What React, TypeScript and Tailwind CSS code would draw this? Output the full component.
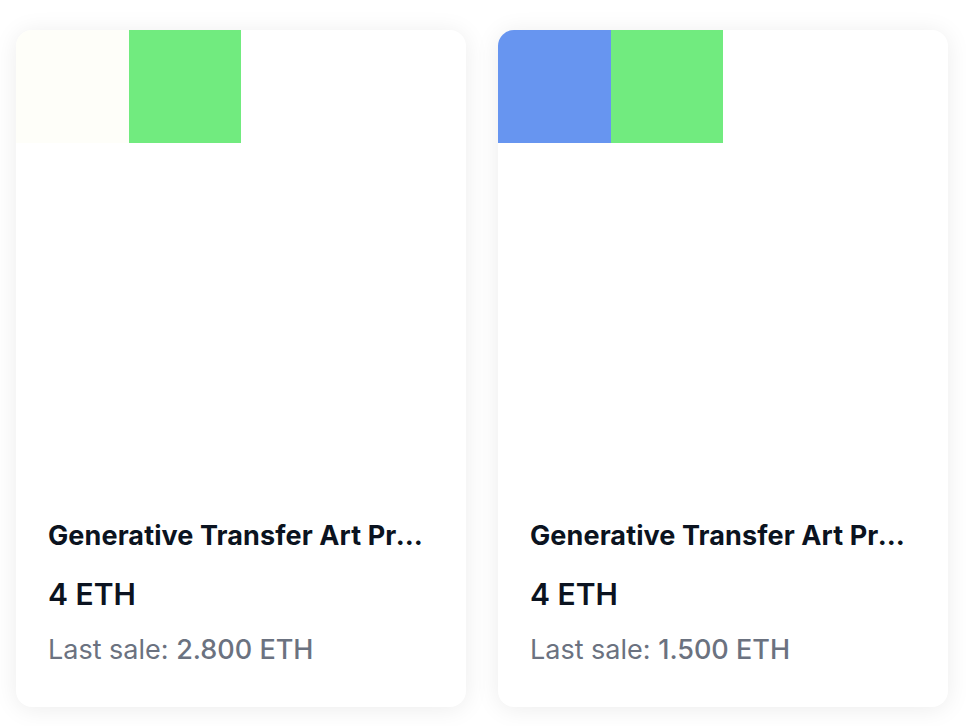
import React from "react";

interface Listing {
  id: string;
  name: string;
  price: string;
  lastSale: string;
  cells: string[];
}

const listings: Listing[] = [
  {
    id: "a",
    name: "Generative Transfer Art Project #1042",
    price: "4 ETH",
    lastSale: "2.800 ETH",
    cells: ["bg-[#fefef9]", "bg-[#71eb7f]"],
  },
  {
    id: "b",
    name: "Generative Transfer Art Project #0871",
    price: "4 ETH",
    lastSale: "1.500 ETH",
    cells: ["bg-[#6795f0]", "bg-[#71eb7f]"],
  },
];

export default function App() {
  return (
    <div className="min-h-screen bg-white font-['Inter',sans-serif]">
      <div className="flex gap-8 px-4 pt-[30px]">
        {listings.map((item) => (
          <ListingCard key={item.id} item={item} />
        ))}
      </div>
    </div>
  );
}

function ListingCard({ item }: { item: Listing }) {
  return (
    <div className="w-[450px] overflow-hidden rounded-2xl bg-white shadow-[0_2px_24px_rgba(0,0,0,0.08)]">
      {/* 4x4 pixel art, only the first row is filled */}
      <div className="grid h-[450px] grid-cols-4 grid-rows-4">
        {item.cells.map((c, i) => (
          <div key={i} className={c} />
        ))}
      </div>
      <div className="px-8 pt-9 pb-[39px]">
        <div className="truncate text-[27px] leading-[40px] font-bold tracking-[0.1px] text-[#0b1320]">
          {item.name}
        </div>
        <div className="mt-5 text-[30px] leading-[36px] font-semibold text-[#0b1320]">
          {item.price}
        </div>
        <div className="mt-5 text-[27px] leading-[36px] text-[#6b7280]">
          Last sale: <span className="font-medium">{item.lastSale}</span>
        </div>
      </div>
    </div>
  );
}
